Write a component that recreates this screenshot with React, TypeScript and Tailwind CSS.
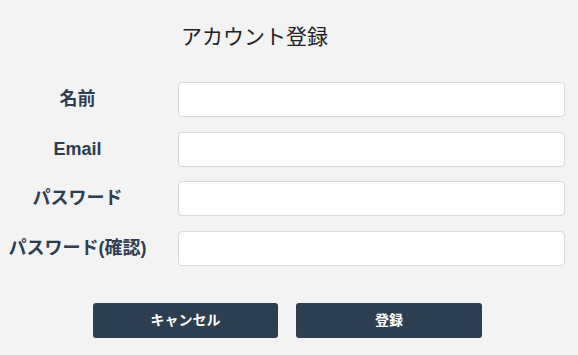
import React from "react";

const fields = [
  { label: "名前", type: "text" },
  { label: "Email", type: "email" },
  { label: "パスワード", type: "password" },
  { label: "パスワード(確認)", type: "password" },
];

const App = () => {
  return (
    <div
      className="w-[578px] h-[355px] bg-[#f3f3f3] overflow-hidden"
      style={{ fontFamily: '"Liberation Sans", "Noto Sans CJK JP", sans-serif' }}
    >
      {/* タイトル */}
      <h1 className="w-[509px] pt-[22px] text-center text-[21px] leading-[30px] font-normal text-[#222]">
        アカウント登録
      </h1>

      {/* フォーム */}
      <div className="mt-[30px] pr-[13px] grid grid-cols-[155px_1fr] gap-x-[23px] gap-y-[14.5px]">
        {fields.map((f, idx) => (
          <React.Fragment key={idx}>
            <label className="flex items-center justify-center text-[18px] font-bold text-[#2c3e50] whitespace-nowrap">
              {f.label}
            </label>
            <input
              type={f.type}
              className="h-[35px] w-full rounded-[4px] border border-[#d9d9d9] bg-white px-2 outline-none"
            />
          </React.Fragment>
        ))}
      </div>

      {/* ボタン */}
      <div className="mt-[37px] pr-[3px] flex justify-center gap-[18px]">
        <button className="w-[185px] h-[35px] rounded-[3px] bg-[#2c3e50] text-white text-[14px] font-semibold">
          キャンセル
        </button>
        <button className="w-[186px] h-[35px] rounded-[3px] bg-[#2c3e50] text-white text-[14px] font-semibold">
          登録
        </button>
      </div>
    </div>
  );
};

export default App;
